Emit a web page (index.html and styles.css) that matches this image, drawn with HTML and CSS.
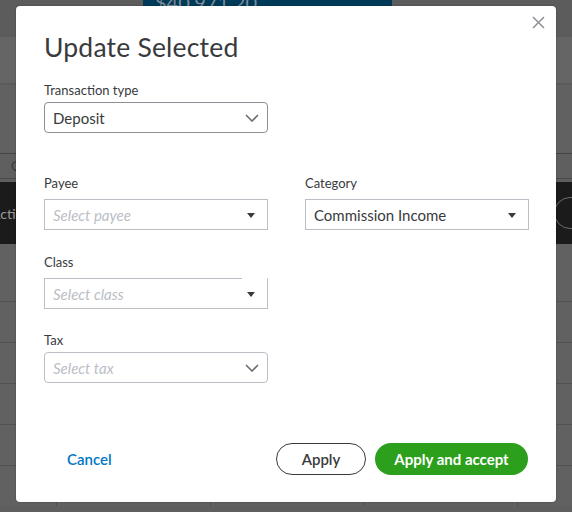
FILE: index.html
```html
<!DOCTYPE html>
<html lang="en">
<head>
<meta charset="utf-8">
<title>Update Selected</title>
<link rel="stylesheet" href="styles.css">
</head>
<body>
<div class="backdrop">
  <div class="bg-top"><div class="balance">$40,971.20</div></div>
  <div class="bg-band"></div>
  <div class="bg-space"></div>
  <div class="bg-toolbar"><span class="bg-btn">C</span></div>
  <div class="bg-gap"></div>
  <div class="bg-dark"><span class="bg-dark-text">Actions</span><span class="bg-pill"></span></div>
  <div class="bg-row bg-row-first"></div>
  <div class="bg-row"></div>
  <div class="bg-row"></div>
  <div class="bg-row"></div>
  <div class="bg-row"></div>
  <div class="bg-row bg-row-cols"><span></span><span></span><span></span><span></span><span></span></div>
</div>

<div class="modal">
  <button class="close" aria-label="Close">
    <svg width="13" height="13" viewBox="0 0 13 13"><path d="M1 1 L12 12 M12 1 L1 12" stroke="#8d9096" stroke-width="1.5" fill="none"/></svg>
  </button>
  <h1 class="title">Update Selected</h1>

  <div class="field field-type">
    <label class="label">Transaction type</label>
    <div class="select select-dark rounded">
      <span class="value">Deposit</span>
      <svg class="chev" width="14" height="8" viewBox="0 0 14 8"><path d="M1 1 L7 7 L13 1" stroke="#6b6c72" stroke-width="1.6" fill="none"/></svg>
    </div>
  </div>

  <div class="grid">
    <div class="field">
      <label class="label">Payee</label>
      <div class="select">
        <span class="placeholder">Select payee</span>
        <svg class="tri" width="8" height="5" viewBox="0 0 8 5"><path d="M0 0 H8 L4 5 Z" fill="#393a3d"/></svg>
      </div>
    </div>
    <div class="field">
      <label class="label">Category</label>
      <div class="select">
        <span class="value">Commission Income</span>
        <svg class="tri" width="8" height="5" viewBox="0 0 8 5"><path d="M0 0 H8 L4 5 Z" fill="#393a3d"/></svg>
      </div>
    </div>
    <div class="field">
      <label class="label">Class</label>
      <div class="select glitch">
        <span class="placeholder">Select class</span>
        <svg class="tri" width="8" height="5" viewBox="0 0 8 5"><path d="M0 0 H8 L4 5 Z" fill="#393a3d"/></svg>
      </div>
    </div>
    <div></div>
    <div class="field field-tax">
      <label class="label">Tax</label>
      <div class="select rounded">
        <span class="placeholder">Select tax</span>
        <svg class="chev" width="14" height="8" viewBox="0 0 14 8"><path d="M1 1 L7 7 L13 1" stroke="#6b6c72" stroke-width="1.6" fill="none"/></svg>
      </div>
    </div>
  </div>

  <div class="footer">
    <a class="cancel" href="#">Cancel</a>
    <div class="actions">
      <button class="btn btn-outline">Apply</button>
      <button class="btn btn-primary">Apply and accept</button>
    </div>
  </div>
</div>
</body>
</html>
```

FILE: styles.css
```css
* { box-sizing: border-box; }
html, body { margin: 0; padding: 0; }
body {
  width: 572px;
  height: 512px;
  overflow: hidden;
  background: #5f5f5f;
  font-family: Lato, "Open Sans", sans-serif;
  color: #393a3d;
  position: relative;
}

/* ---------- dimmed page behind ---------- */
.backdrop { width: 572px; }
.bg-top {
  height: 37px;
  background: #5c5c5c;
  display: flex;
}
.balance {
  margin-left: 143px;
  width: 249px;
  height: 37px;
  background: #003a59;
  color: #7d8a94;
  font-size: 20px;
  line-height: 1;
  padding-left: 12px;
  margin-top: -8px;
  white-space: nowrap;
}
.bg-band {
  height: 48px;
  background: #656565;
  border-bottom: 2px solid #5a5a5a;
}
.bg-space { height: 68px; background: #616161; }
.bg-toolbar {
  height: 26px;
  border-top: 1px solid #444;
  border-bottom: 1px solid #4a4a4a;
  background: #5f5f5f;
  display: flex;
  align-items: center;
}
.bg-btn {
  margin-left: 11px;
  color: #3a3a3a;
  font-size: 13px;
}
.bg-gap { height: 3px; background: #5f5f5f; }
.bg-dark {
  height: 62px;
  background: #1b1b1c;
  display: flex;
  align-items: center;
  justify-content: space-between;
}
.bg-dark-text {
  color: #9a9a9a;
  font-size: 14px;
  margin-left: -9px;
  white-space: nowrap;
}
.bg-pill {
  width: 40px;
  height: 32px;
  border: 1px solid #6d6d6d;
  border-radius: 16px;
  margin-right: -22px;
}
.bg-row {
  height: 41px;
  border-bottom: 1px solid #525252;
  background: #616161;
}
.bg-row-first { height: 58px; }
.bg-row-cols {
  height: 40px;
  display: flex;
  border-bottom: none;
}
.bg-row-cols span {
  height: 100%;
  border-right: 1px solid #525252;
}
.bg-row-cols span:nth-child(1) { width: 57px; }
.bg-row-cols span:nth-child(2) { width: 154px; }
.bg-row-cols span:nth-child(3) { width: 154px; }
.bg-row-cols span:nth-child(4) { width: 153px; }
.bg-row-cols span:nth-child(5) { flex: 1; border-right: none; }

/* ---------- modal ---------- */
.modal {
  position: absolute;
  left: 16px;
  top: 6px;
  width: 540px;
  height: 496px;
  background: #fff;
  border-radius: 4px;
  padding: 0 28px 0 28px;
  box-shadow: 0 0 2px rgba(0,0,0,0.3);
}
.close {
  position: absolute;
  right: 10px;
  top: 8px;
  width: 16px;
  height: 16px;
  padding: 0;
  border: none;
  background: none;
  display: flex;
  align-items: center;
  justify-content: center;
}
.title {
  margin: 0;
  padding-top: 25px;
  font-size: 26.5px;
  line-height: 32px;
  font-weight: 400;
  color: #393a3d;
  letter-spacing: 0.2px;
}
.label {
  display: block;
  font-size: 13px;
  line-height: 16px;
  color: #393a3d;
  margin-bottom: 8px;
}
.field-type { margin-top: 19px; width: 224px; }
.field-type .label,
.field-tax .label { margin-bottom: 4px; }

.select {
  height: 31px;
  border: 1px solid #babec5;
  display: flex;
  align-items: center;
  justify-content: space-between;
  padding: 0 12px 0 8px;
  position: relative;
  background: #fff;
}
.select.rounded { border-radius: 4px; padding-right: 8px; }
.select-dark { border-color: #8d9096; }
.value { font-size: 15px; color: #393a3d; }
.placeholder { font-size: 15px; font-style: italic; color: #babec5; }
.tri { margin-top: 1px; }

.select.glitch { border-top-color: transparent; }
.select.glitch::before {
  content: "";
  position: absolute;
  left: -1px;
  top: -1px;
  width: 198px;
  height: 1px;
  background: #babec5;
}

.grid {
  display: grid;
  grid-template-columns: 224px 224px;
  column-gap: 37px;
  row-gap: 24px;
  margin-top: 42px;
}
.field-tax { margin-top: -1px; }

.footer {
  display: flex;
  justify-content: space-between;
  align-items: center;
  margin-top: 60px;
  padding-left: 23px;
}
.cancel {
  color: #0077c5;
  font-size: 15px;
  font-weight: 600;
  text-decoration: none;
}
.actions { display: flex; gap: 9px; }
.btn {
  height: 32px;
  border-radius: 16px;
  font-family: inherit;
  font-size: 15px;
  font-weight: 600;
  padding: 0;
  cursor: pointer;
}
.btn-outline {
  width: 90px;
  background: #fff;
  border: 1px solid #393a3d;
  color: #393a3d;
}
.btn-primary {
  width: 153px;
  background: #2ca01c;
  border: none;
  color: #fff;
  font-weight: 700;
}
```
